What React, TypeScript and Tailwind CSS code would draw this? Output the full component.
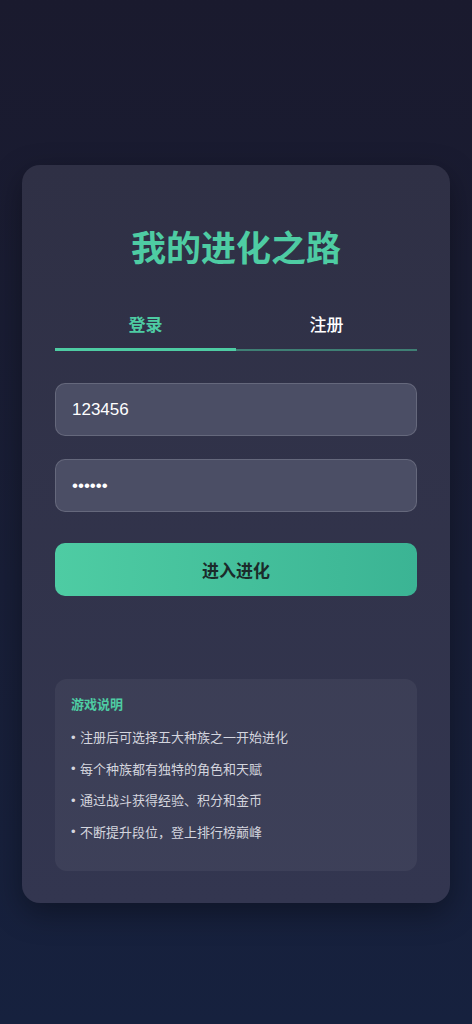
import { FC } from 'react';

const font = { fontFamily: '"Noto Sans CJK SC", "Noto Sans", sans-serif' };
const latin = { fontFamily: '"Liberation Sans", "Noto Sans CJK SC", sans-serif' };

const tips = [
  '注册后可选择五大种族之一开始进化',
  '每个种族都有独特的角色和天赋',
  '通过战斗获得经验、积分和金币',
  '不断提升段位，登上排行榜巅峰',
];

const App: FC = () => {
  return (
    <div
      className="min-h-[1024px] w-full bg-gradient-to-b from-[#1a1a2e] to-[#16213e] px-[22px] pt-[165px] pb-[120px]"
      style={font}
    >
      <div className="rounded-[18px] bg-[#2f3146] bg-gradient-to-b from-[#2f3045] to-[#333650] px-[33px] pt-[57px] pb-[32px] shadow-[0_10px_30px_rgba(0,0,0,0.35)]">
        <h1 className="text-center text-[35px] leading-[48px] font-bold text-[#4ecca3]">
          我的进化之路
        </h1>

        <div className="mt-[42px] flex border-b-2 border-[#3f7f74]">
          <button className="relative flex-1 pb-[13px] text-[17px] leading-[24px] font-semibold text-[#4ecca3]">
            登录
            <span className="absolute right-0 -bottom-[2px] left-0 h-[3px] bg-[#4ecca3]" />
          </button>
          <button className="flex-1 pb-[13px] text-[17px] leading-[24px] font-medium text-white">
            注册
          </button>
        </div>

        <div className="mt-[32px] flex flex-col gap-[23px]">
          <input
            className="h-[53px] w-full rounded-[10px] border border-white/15 bg-[#4b4e65] px-[16px] text-[17px] text-white outline-none"
            style={latin}
            defaultValue="123456"
          />
          <input
            type="password"
            className="h-[53px] w-full rounded-[10px] border border-white/15 bg-[#4b4e65] px-[16px] text-[17px] text-white outline-none"
            style={latin}
            defaultValue="123456"
          />
        </div>

        <button className="mt-[31px] h-[53px] w-full rounded-[10px] bg-gradient-to-r from-[#4ecca3] to-[#3bb494] text-[17px] font-bold text-[#1b2b2a]">
          进入进化
        </button>

        <div className="mt-[83px] rounded-[12px] bg-white/[0.05] px-[16px] pt-[15px] pb-[29px]">
          <h3 className="text-[13px] leading-[20px] font-bold text-[#4ecca3]">游戏说明</h3>
          <ul className="mt-[13px] flex flex-col gap-[11.5px]">
            {tips.map((t) => (
              <li key={t} className="flex h-[20px] items-center text-[13px] leading-[20px] text-[#d4d5de]">
                <span className="w-[9px] shrink-0 leading-none" style={latin}>
                  •
                </span>
                {t}
              </li>
            ))}
          </ul>
        </div>
      </div>
    </div>
  );
};

export default App;
